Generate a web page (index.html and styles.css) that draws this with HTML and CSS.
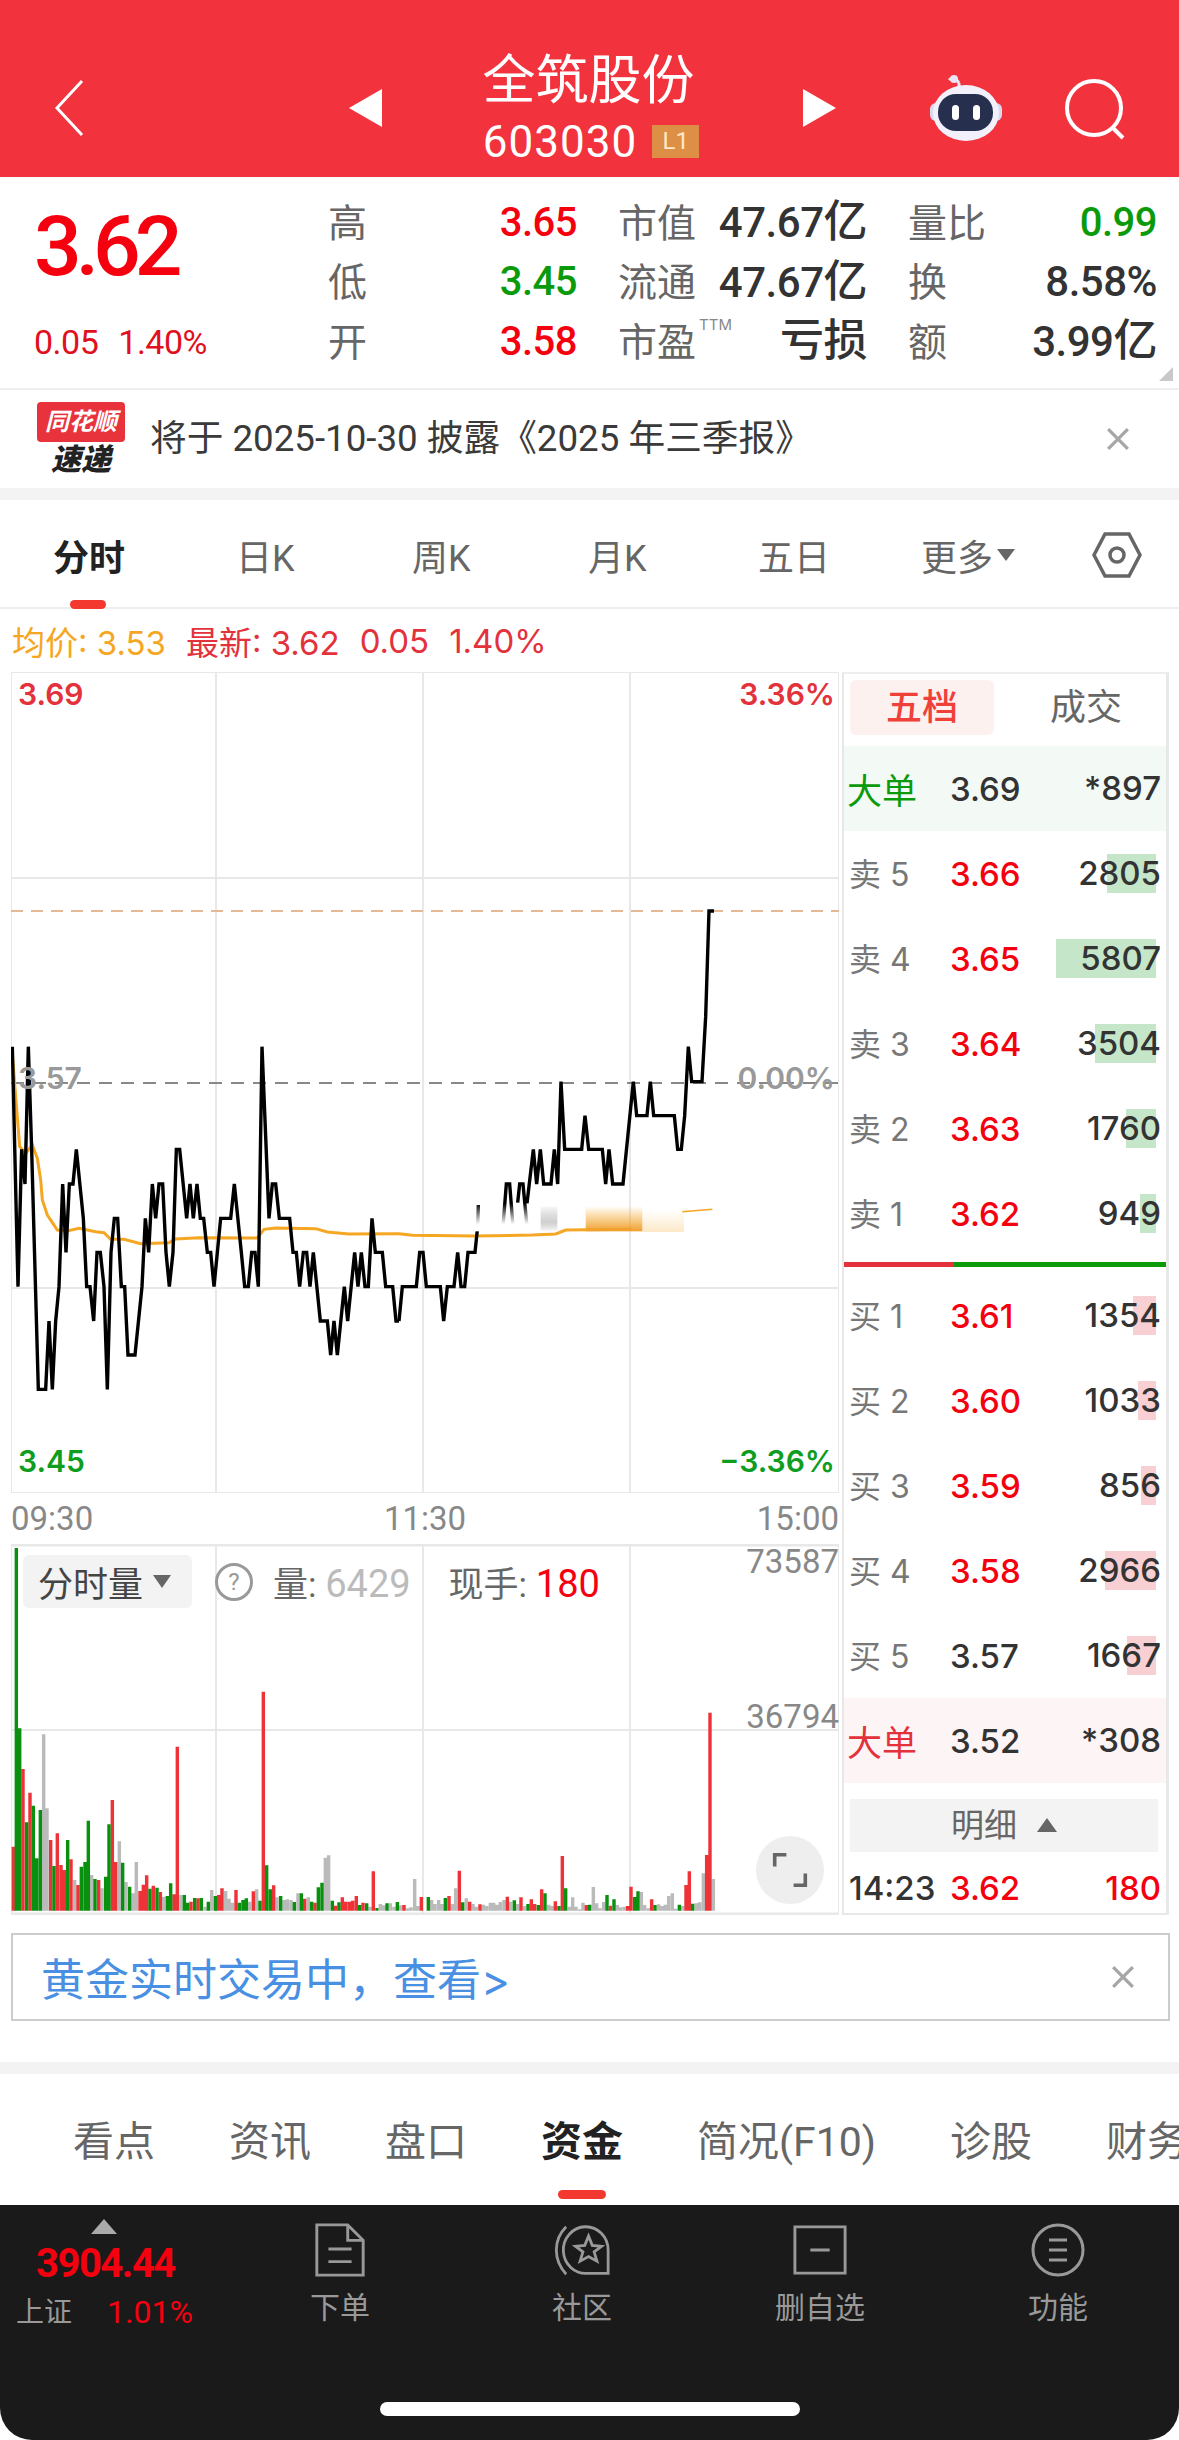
FILE: index.html
```html
<!Doctype html>
<html lang="zh-CN">
<head>
	<meta charset="utf-8">
	<title>全筑股份 603030</title>
	<link rel="stylesheet" href="styles.css">
</head>

<body>

	<header class="top">
		<svg class="back" viewBox="0 0 32 58"><path d="M29 2 4 29l25 27"/></svg>
		<span class="tri tri-left"></span>
		<div class="title">
			<div class="title-name">全筑股份</div>
			<div class="title-code">603030<span class="badge">L1</span></div>
		</div>
		<span class="tri tri-right"></span>
		<svg class="robot" viewBox="0 0 74 68">
			<path class="robot-stalk" d="M30 10c-4-6-8-5-10-3M30 10v4"/>
			<circle cx="25" cy="6" r="4" fill="#e8e6f6"/>
			<rect x="1" y="30" width="72" height="18" rx="6" fill="#d9d9ef"/>
			<ellipse cx="37" cy="40" rx="33" ry="28" fill="#f2f1fb"/>
			<rect x="9" y="21" width="55" height="37" rx="18" fill="#262f4e"/>
			<rect x="23" y="32" width="7" height="15" rx="3.5" fill="#fff"/>
			<rect x="44" y="32" width="7" height="15" rx="3.5" fill="#fff"/>
		</svg>
		<svg class="search" viewBox="0 0 62 64"><circle cx="30" cy="30" r="27"/><path d="M49 50l10 10"/></svg>
	</header>

	<section class="stats">
		<div class="quote">
			<div class="quote-price">3.62</div>
			<div class="quote-change"><span>0.05</span><span>1.40%</span></div>
		</div>
		<div class="stat-grid">
			<div class="stat"><span class="stat-key">高</span><span class="stat-val red">3.65</span></div>
			<div class="stat"><span class="stat-key">市值</span><span class="stat-val">47.67<span class="yi">亿</span></span></div>
			<div class="stat"><span class="stat-key">量比</span><span class="stat-val green">0.99</span></div>
			<div class="stat"><span class="stat-key">低</span><span class="stat-val green">3.45</span></div>
			<div class="stat"><span class="stat-key">流通</span><span class="stat-val">47.67<span class="yi">亿</span></span></div>
			<div class="stat"><span class="stat-key">换</span><span class="stat-val">8.58%</span></div>
			<div class="stat"><span class="stat-key">开</span><span class="stat-val red">3.58</span></div>
			<div class="stat"><span class="stat-key">市盈<sup class="ttm">TTM</sup></span><span class="stat-val"><span class="yi">亏损</span></span></div>
			<div class="stat"><span class="stat-key">额</span><span class="stat-val">3.99<span class="yi">亿</span></span></div>
		</div>
		<span class="corner"></span>
	</section>

	<section class="notice">
		<div class="logo">
			<div class="logo-top">同花顺</div>
			<div class="logo-bottom">速递</div>
		</div>
		<div class="notice-text">将于 2025-10-30 披露《2025 年三季报》</div>
		<svg class="close" viewBox="0 0 22 22"><path d="M2 2l18 18M20 2 2 20"/></svg>
	</section>

	<section class="periods">
		<span class="period period-on">分时</span>
		<span class="period">日K</span>
		<span class="period">周K</span>
		<span class="period">月K</span>
		<span class="period">五日</span>
		<span class="period">更多<i class="caret"></i></span>
		<svg class="hex" viewBox="0 0 50 46"><path d="M13 2h24l11 21-11 21H13L2 23z"/><circle cx="25" cy="23" r="7"/></svg>
	</section>

	<div class="avg-row">
		<span class="orange">均价: 3.53</span>
		<span class="soft-red">最新: 3.62</span>
		<span class="soft-red">0.05</span>
		<span class="soft-red">1.40%</span>
	</div>

	<section class="market">
		<div class="charts">
			<div class="price-chart">
				<svg class="canvas" viewBox="12 672 828 821">
					<defs>
						<linearGradient id="fade-white" x1="0" y1="0" x2="0" y2="1">
							<stop offset="0" stop-color="#fff" stop-opacity="0"/>
							<stop offset=".75" stop-color="#fff"/>
						</linearGradient>
						<linearGradient id="fade-orange" x1="0" y1="0" x2="0" y2="1">
							<stop offset="0" stop-color="#f5a623" stop-opacity="0"/>
							<stop offset="1" stop-color="#f0a030"/>
						</linearGradient>
						<linearGradient id="fade-pale" x1="0" y1="0" x2="0" y2="1">
							<stop offset="0" stop-color="#f5a623" stop-opacity="0"/>
							<stop offset="1" stop-color="#f5a623" stop-opacity=".25"/>
						</linearGradient>
						<linearGradient id="fade-gray" x1="0" y1="0" x2="0" y2="1">
							<stop offset="0" stop-color="#aaa" stop-opacity=".1"/>
							<stop offset=".6" stop-color="#bbb" stop-opacity=".7"/>
							<stop offset="1" stop-color="#fff"/>
						</linearGradient>
					</defs>
					<path class="grid-line" d="M12 672H840M12 878H840M12 1288H840M12 1493H840M12 672V1493M217 672V1493M424 672V1493M631 672V1493M840 672V1493"/>
					<path class="dash-orange" d="M12 911H840"/>
					<path class="dash-gray" d="M12 1083H840"/>
					<g transform="translate(0 1030) scale(.33333)">
						<polyline class="avg-line" points="40,70 50,200 62,350 80,370 100,345 115,385 125,450 130,510 145,555 175,600 205,603 240,595 290,605 315,608 335,628 375,628 425,641 510,638 530,627 600,623 775,624 795,598 830,594 950,596 985,606 1050,612 1200,611"/>
						<polyline class="price-line" points="40,50 57,770 68,358 78,462 88,50 98,360 118,1078 140,1078 150,873 160,1078 170,873 180,770 191,462 201,667 211,462 222,462 232,358 253,565 263,770 273,770 284,873 294,667 304,667 315,770 325,1078 336,667 346,565 356,565 367,770 377,770 387,975 408,975 429,770 439,565 449,667 460,462 470,565 480,462 491,462 501,667 511,770 522,667 532,358 542,358 563,565 573,462 583,565 594,462 604,565 614,565 625,667 635,667 645,770 665,565 695,565 706,462 727,667 737,770 748,770 758,667 768,667 778,770 789,50 810,565 820,462 830,462 841,565 872,565 882,667 892,667 902,770 913,667 923,667 933,770 943,667 964,873 985,873 995,975 1005,873 1015,975 1036,770 1046,873 1067,667 1077,770 1087,667 1098,770 1108,770 1119,565 1129,667 1150,667 1160,770 1181,770 1191,873 1200,873"/>
					</g>
					<g transform="translate(400 1030) scale(.33333)">
						<polyline class="avg-line" points="0,611 40,616 230,618 400,615 470,612 500,600 700,598"/>
						<polyline class="avg-line-thin" points="850,545 940,538"/>
						<rect x="560" y="528" width="170" height="76" fill="url(#fade-orange)"/>
						<rect x="730" y="540" width="125" height="66" fill="url(#fade-pale)"/>
						<rect x="425" y="530" width="50" height="76" fill="url(#fade-gray)"/>
						<polyline class="price-line" points="0,873 10,770 52,770 62,667 72,667 82,770 124,770 134,873 145,770 165,770 176,667 186,770 197,770 207,667 228,667 236,590 238,525"/>
						<polyline class="price-line" points="312,590 322,462 332,462 342,590"/>
						<polyline class="price-line" points="356,518 362,462 372,462 384,590"/>
						<polyline class="price-line" points="384,520 403,358 413,462 424,358 434,462 456,462 466,358 476,462 486,155 497,358 548,358 558,257 569,358 610,358 620,462 630,358 641,462 672,462 703,155 713,257 744,257 754,155 764,257 826,257 836,358 847,358 857,257 868,50 878,155 909,155 920,-40 930,-357 945,-357"/>
						<rect x="225" y="520" width="175" height="84" fill="url(#fade-white)"/>
					</g>
				</svg>
				<span class="axis-label al-tl soft-red">3.69</span>
				<span class="axis-label al-tr soft-red">3.36%</span>
				<span class="axis-label al-ml muted">3.57</span>
				<span class="axis-label al-mr muted">0.00%</span>
				<span class="axis-label al-bl deep-green">3.45</span>
				<span class="axis-label al-br deep-green">−3.36%</span>
			</div>

			<div class="time-axis"><span>09:30</span><span>11:30</span><span>15:00</span></div>

			<div class="vol-chart">
				<svg class="canvas" viewBox="12 1544 828 371">
					<path class="grid-line" d="M12 1730H840M12 1544V1915M217 1544V1915M424 1544V1915M631 1544V1915M840 1544V1915"/>
					<path class="grid-strong" d="M12 1545H840M12 1914H840"/>
					<g transform="translate(0 1680) scale(.33333)">
						<path class="bar bar-gray" d="M134 692V163M144 692V385M227 692V600M278 692V585M309 692V625M361 692V484M381 692V606M402 692V640M412 692V546M494 692V650M546 692V645M618 692V680M638 692V630M680 692V633M690 692V656M700 692V668M752 692V665M773 692V628M834 692V652M855 692V660M865 692V658M876 692V660M897 692V640M928 692V652M979 692V533M989 692V526M1113 692V680"/>
						<path class="bar bar-red" d="M43 692V500M72 692V267M93 692V338M155 692V480M175 692V460M186 692V555M196 692V570M216 692V538M237 692V615M299 692V600M340 692V360M350 692V546M423 692V633M433 692V614M443 692V586M463 692V617M484 692V636M525 692V643M535 692V200M576 692V665M597 692V655M659 692V645M669 692V625M711 692V630M763 692V634M793 692V35M824 692V616M917 692V656M948 692V668M1010 692V677M1030 692V652M1040 692V665M1051 692V665M1061 692V662M1072 692V648M1092 692V668M1123 692V574"/>
						<path class="bar bar-green" d="M52 692V-396M62 692V145M83 692V427M103 692V377M113 692V535M124 692V390M165 692V558M206 692V480M247 692V560M258 692V546M268 692V422M288 692V597M320 692V590M330 692V433M371 692V548M392 692V620M453 692V626M474 692V623M505 692V648M515 692V610M556 692V645M566 692V668M587 692V654M607 692V654M628 692V665M649 692V648M721 692V668M732 692V660M742 692V655M783 692V662M803 692V556M814 692V628M845 692V648M886 692V666M907 692V640M938 692V665M958 692V622M969 692V608M1000 692V662M1020 692V667M1082 692V675M1103 692V670M1134 692V684"/>
					</g>
					<g transform="translate(370 1680) scale(.33333)">
						<path class="bar bar-gray" d="M34 692V672M44 692V676M64 692V670M75 692V680M95 692V676M116 692V685M126 692V682M137 692V597M147 692V678M188 692V660M198 692V672M209 692V660M219 692V672M250 692V672M260 692V625M292 692V655M312 692V672M322 692V680M343 692V674M353 692V678M364 692V668M374 692V668M384 692V674M394 692V666M405 692V660M425 692V665M446 692V672M466 692V678M539 692V674M549 692V678M601 692V680M611 692V652M621 692V680M632 692V688M642 692V668M673 692V621M683 692V670M693 692V685M704 692V666M745 692V675M755 692V682M766 692V680M817 692V636M827 692V675M838 692V685M869 692V673M879 692V678M889 692V674M899 692V648M910 692V640M920 692V686M941 692V678M982 692V670M992 692V667M1003 692V580M1033 692V597"/>
						<path class="bar bar-red" d="M105 692V675M157 692V651M240 692V648M271 692V572M302 692V665M333 692V673M415 692V650M456 692V652M487 692V658M497 692V672M518 692V628M559 692V664M580 692V528M652 692V675M724 692V677M776 692V678M786 692V620M848 692V658M951 692V615M961 692V574M1013 692V525M1018 692V525M1023 692V98"/>
						<path class="bar bar-green" d="M54 692V670M85 692V666M178 692V651M229 692V654M281 692V667M436 692V661M477 692V672M508 692V675M528 692V640M570 692V678M590 692V625M662 692V674M714 692V645M735 692V658M797 692V651M807 692V634M858 692V675M931 692V674M971 692V671"/>
					</g>
				</svg>
				<div class="vol-legend">
					<span class="vol-pill">分时量<i class="caret caret-pill"></i></span>
					<span class="help">?</span>
					<span>量: <b class="light">6429</b></span>
					<span class="vol-now">现手: <b class="red">180</b></span>
				</div>
				<span class="vol-max vm-top">73587</span>
				<span class="vol-max vm-mid">36794</span>
				<span class="expand">
					<svg viewBox="0 0 40 40"><path d="M3 16V3h13M37 24v13H24"/></svg>
				</span>
			</div>
		</div>

		<div class="book">
			<div class="book-tabs">
				<span class="book-tab book-tab-on">五档</span>
				<span class="book-tab">成交</span>
			</div>
			<div class="row row-big-sell"><span class="green-label">大单</span><span class="px">3.69</span><span class="qty">*897</span></div>
			<div class="row"><span class="lbl">卖 5</span><span class="px red">3.66</span><span class="qty"><i class="vol-bar vb-sell" style="width:49px"></i>2805</span></div>
			<div class="row"><span class="lbl">卖 4</span><span class="px red">3.65</span><span class="qty"><i class="vol-bar vb-sell" style="width:100px"></i>5807</span></div>
			<div class="row"><span class="lbl">卖 3</span><span class="px red">3.64</span><span class="qty"><i class="vol-bar vb-sell" style="width:61px"></i>3504</span></div>
			<div class="row"><span class="lbl">卖 2</span><span class="px red">3.63</span><span class="qty"><i class="vol-bar vb-sell" style="width:30px"></i>1760</span></div>
			<div class="row"><span class="lbl">卖 1</span><span class="px red">3.62</span><span class="qty"><i class="vol-bar vb-sell" style="width:16px"></i>949</span></div>
			<div class="split"><span class="split-red"></span><span class="split-green"></span></div>
			<div class="row"><span class="lbl">买 1</span><span class="px red">3.61</span><span class="qty"><i class="vol-bar vb-buy" style="width:23px"></i>1354</span></div>
			<div class="row"><span class="lbl">买 2</span><span class="px red">3.60</span><span class="qty"><i class="vol-bar vb-buy" style="width:18px"></i>1033</span></div>
			<div class="row"><span class="lbl">买 3</span><span class="px red">3.59</span><span class="qty"><i class="vol-bar vb-buy" style="width:15px"></i>856</span></div>
			<div class="row"><span class="lbl">买 4</span><span class="px red">3.58</span><span class="qty"><i class="vol-bar vb-buy" style="width:51px"></i>2966</span></div>
			<div class="row"><span class="lbl">买 5</span><span class="px">3.57</span><span class="qty"><i class="vol-bar vb-buy" style="width:29px"></i>1667</span></div>
			<div class="row row-big-buy"><span class="red-label">大单</span><span class="px">3.52</span><span class="qty">*308</span></div>
			<div class="detail">明细<i class="caret-up"></i></div>
			<div class="row row-last"><span>14:23</span><span class="px red">3.62</span><span class="qty red">180</span></div>
		</div>
	</section>

	<section class="gold">
		<span class="gold-text">黄金实时交易中，查看&gt;</span>
		<svg class="close" viewBox="0 0 22 22"><path d="M2 2l18 18M20 2 2 20"/></svg>
	</section>

	<section class="sub-tabs">
		<span>看点</span>
		<span>资讯</span>
		<span>盘口</span>
		<span class="sub-on">资金</span>
		<span>简况(F10)</span>
		<span>诊股</span>
		<span>财务</span>
	</section>

	<footer class="dock">
		<div class="dock-row">
			<div class="index">
				<i class="index-up"></i>
				<div class="index-value">3904.44</div>
				<div class="index-line"><span>上证</span><span class="index-pct">1.01%</span></div>
			</div>
			<div class="dock-item dock-order">
				<svg viewBox="0 0 54 58"><path d="M3 3h32l16 16v36H3zM35 3v16h16M15 28h24M15 41h24"/></svg>
				<span>下单</span>
			</div>
			<div class="dock-item dock-social">
				<svg viewBox="0 0 60 58"><path d="M13 4C-1 18-1 40 13 55M58 54H36a24 25 0 1 1 22-25zM37 14l4 10 10 1-8 6 3 10-9-5-9 5 3-10-8-6 10-1z"/></svg>
				<span>社区</span>
			</div>
			<div class="dock-item dock-fav">
				<svg viewBox="0 0 58 54"><path d="M3 3h52v48H3zM19 27h20"/></svg>
				<span>删自选</span>
			</div>
			<div class="dock-item dock-more">
				<svg viewBox="0 0 56 56"><circle cx="28" cy="28" r="25"/><path d="M19 18h18M19 28h18M19 38h18"/></svg>
				<span>功能</span>
			</div>
		</div>
		<div class="home-bar"></div>
	</footer>

</body>

</html>
```

FILE: styles.css
```css
html, body {
	margin: 0;
	padding: 0;
	background: #fff;
}

body {
	width: 1179px;
	height: 2440px;
	overflow: hidden;
	font-family: Inter, "Noto Sans CJK SC", sans-serif;
	color: #333;
}

svg {
	display: block;
}

i {
	font-style: normal;
}

.red { color: #f5000f; }
.green { color: #0a9a0a; }
.soft-red { color: #e3323c; }
.orange { color: #f5a623; }
.deep-green { color: #0f9d1f; }
.muted { color: #999; }

/* top bar */

.top {
	height: 177px;
	background: #f2323c;
	display: flex;
	align-items: center;
	padding: 40px 0 0 53px;
	box-sizing: border-box;
}

.back {
	width: 32px;
	height: 58px;
	margin-top: -1px;
}

.back path {
	fill: none;
	stroke: #fff;
	stroke-width: 3;
}

.tri {
	width: 0;
	height: 0;
	border-top: 19px solid transparent;
	border-bottom: 19px solid transparent;
	margin-top: -1px;
}

.tri-left {
	margin-left: 264px;
	border-right: 33px solid #fff;
}

.tri-right {
	border-left: 33px solid #fff;
}

.title {
	width: 421px;
	text-align: center;
	color: #fff;
	margin-top: -6px;
}

.title-name {
	font-size: 53px;
	line-height: 72px;
	font-weight: 400;
	margin-left: -8px;
}

.title-code {
	font-family: Roboto, sans-serif;
	font-size: 44px;
	line-height: 52px;
	letter-spacing: 1px;
	display: flex;
	align-items: center;
	justify-content: center;
	gap: 15px;
	margin-left: -3px;
}

.badge {
	width: 47px;
	height: 33px;
	background: #dc8f45;
	color: #ffe7c8;
	font-size: 24px;
	line-height: 33px;
	letter-spacing: 0;
	text-align: center;
}

.robot {
	width: 74px;
	height: 68px;
	margin-left: 93px;
	margin-top: -3px;
}

.robot-stalk {
	fill: none;
	stroke: #e8e6f6;
	stroke-width: 3;
}

.search {
	width: 62px;
	height: 64px;
	margin-left: 61px;
	margin-top: 3px;
}

.search circle, .search path {
	fill: none;
	stroke: #fff;
	stroke-width: 4;
}

/* quote block */

.stats {
	position: relative;
	height: 211px;
	border-bottom: 2px solid #eee;
	display: flex;
	padding-left: 34px;
}

.quote {
	width: 294px;
}

.quote-price {
	font-family: Roboto, sans-serif;
	font-weight: 500;
	font-size: 84px;
	line-height: 84px;
	letter-spacing: -6px;
	color: #f5000f;
	margin-top: 28px;
}

.quote-change {
	font-family: Roboto, sans-serif;
	font-size: 34px;
	line-height: 40px;
	color: #e01020;
	display: flex;
	gap: 20px;
	margin-top: 33px;
	letter-spacing: -0.5px;
}

.stat-grid {
	display: grid;
	grid-template-columns: repeat(3, 249px);
	grid-auto-rows: 59.5px;
	column-gap: 41px;
	padding-top: 16px;
}

.stat {
	display: flex;
	align-items: center;
	justify-content: space-between;
}

.stat-key {
	font-size: 39px;
	line-height: 44px;
	color: #666;
	position: relative;
}

.ttm {
	position: absolute;
	left: 100%;
	top: -5px;
	font-size: 15px;
	line-height: 20px;
	margin-left: 3px;
	color: #888;
}

.stat-val {
	font-family: Roboto, "Noto Sans CJK SC", sans-serif;
	font-size: 42px;
	line-height: 46px;
	font-weight: 500;
	letter-spacing: -0.5px;
}

.stat-val.red, .stat-val.green {
	font-size: 40px;
}

.yi {
	font-size: 44px;
}

.corner {
	position: absolute;
	right: 6px;
	bottom: 7px;
	border-left: 14px solid transparent;
	border-bottom: 14px solid #c8c8c8;
}

/* notice */

.notice {
	height: 98px;
	border-bottom: 12px solid #f3f3f3;
	display: flex;
	align-items: center;
	padding-left: 37px;
}

.logo {
	width: 88px;
	text-align: center;
}

.logo-top {
	background: #e8323c;
	color: #fff;
	font-size: 24px;
	line-height: 40px;
	font-weight: 700;
	font-style: italic;
	border-radius: 4px;
	white-space: nowrap;
	overflow: hidden;
}

.logo-bottom {
	font-size: 30px;
	line-height: 34px;
	font-weight: 900;
	font-style: italic;
	color: #222;
}

.notice-text {
	font-family: Roboto, "Noto Sans CJK SC", sans-serif;
	font-size: 36.7px;
	line-height: 44px;
	margin-left: 25px;
	color: #3a3a3a;
}

.close {
	width: 24px;
	height: 24px;
	margin-left: auto;
	margin-right: 49px;
}

.close path {
	fill: none;
	stroke: #a6a6a6;
	stroke-width: 3;
}

/* period tabs */

.periods {
	height: 107px;
	border-bottom: 2px solid #eee;
	display: flex;
	align-items: center;
	padding-left: 53px;
}

.period {
	font-family: Roboto, "Noto Sans CJK SC", sans-serif;
	font-size: 36px;
	color: #666;
	width: 176px;
	display: flex;
	align-items: center;
	height: 50px;
	margin-top: 2px;
}

.period:nth-child(4) { width: 170px; }
.period:nth-child(5) { width: 163px; }
.period:nth-child(6) { width: 171px; }

.period-on {
	color: #222;
	font-weight: 700;
	position: relative;
	width: 183px;
}

.period-on:after {
	content: "";
	position: absolute;
	left: 17px;
	top: 70px;
	width: 36px;
	height: 9px;
	border-radius: 5px;
	background: #f33830;
}

.caret {
	border-left: 9px solid transparent;
	border-right: 9px solid transparent;
	border-top: 12px solid #666;
	margin-left: 4px;
}

.hex {
	width: 50px;
	height: 46px;
	margin-top: 2px;
}

.hex path, .hex circle {
	fill: none;
	stroke: #666;
	stroke-width: 3.5;
}

.avg-row {
	height: 63px;
	padding-left: 12px;
	display: flex;
	align-items: center;
	gap: 20px;
	font-size: 33px;
	box-sizing: border-box;
}

/* chart and order book */

.market {
	display: flex;
	padding-left: 11px;
	height: 1245px;
}

.charts {
	width: 829px;
	margin-right: 2px;
}

.canvas {
	position: absolute;
	left: 0;
	top: 0;
	width: 828px;
	height: 100%;
}

.price-chart {
	position: relative;
	height: 821px;
}

.grid-line {
	fill: none;
	stroke: #e8e8e8;
	stroke-width: 2;
}

.grid-strong {
	fill: none;
	stroke: #e8e8e8;
	stroke-width: 3;
}

.dash-orange {
	fill: none;
	stroke: #e4ba96;
	stroke-width: 2;
	stroke-dasharray: 12 8;
}

.dash-gray {
	fill: none;
	stroke: #888;
	stroke-width: 2;
	stroke-dasharray: 13 9;
}

.price-line {
	fill: none;
	stroke: #000;
	stroke-width: 3.4;
	vector-effect: non-scaling-stroke;
}

.avg-line {
	fill: none;
	stroke: #f5a623;
	stroke-width: 3;
	vector-effect: non-scaling-stroke;
}

.avg-line-thin {
	fill: none;
	stroke: #f5a623;
	stroke-width: 1.5;
	vector-effect: non-scaling-stroke;
}

.axis-label {
	position: absolute;
	font-size: 30px;
	line-height: 36px;
	font-weight: 600;
}

.al-tl { left: 7px; top: 4px; }
.al-tr { right: 5px; top: 4px; }
.al-ml { left: 7px; top: 388px; }
.al-mr { right: 5px; top: 388px; }
.al-bl { left: 7px; bottom: 14px; }
.al-br { right: 5px; bottom: 14px; }

.time-axis {
	height: 51px;
	display: flex;
	justify-content: space-between;
	align-items: center;
	font-family: Roboto, sans-serif;
	font-size: 33px;
	color: #888;
	padding-right: 1px;
}

.vol-chart {
	position: relative;
	height: 371px;
}

.bar {
	fill: none;
	stroke-width: 10.3;
}

.bar-gray { stroke: #bababa; }
.bar-red { stroke: #ee3338; }
.bar-green { stroke: #0a900f; }

.vol-legend {
	position: absolute;
	left: 12px;
	top: 11px;
	display: flex;
	align-items: center;
	font-size: 35px;
	color: #666;
	font-family: Roboto, "Noto Sans CJK SC", sans-serif;
}

.vol-legend b {
	font-weight: 400;
	font-size: 38px;
}

.light {
	color: #bbb;
}

.vol-pill {
	width: 169px;
	height: 53px;
	background: #f3f3f3;
	border-radius: 6px;
	color: #444;
	display: flex;
	align-items: center;
	padding-left: 15px;
	box-sizing: border-box;
}

.caret-pill {
	margin-left: 10px;
	border-left-width: 9px;
	border-right-width: 9px;
	border-top-width: 13px;
}

.help {
	width: 32px;
	height: 32px;
	border: 3px solid #999;
	border-radius: 50%;
	color: #999;
	font-size: 24px;
	line-height: 32px;
	text-align: center;
	margin: 0 20px 0 23px;
}

.vol-now {
	margin-left: 38px;
}

.vol-max {
	position: absolute;
	right: 1px;
	font-family: Roboto, sans-serif;
	font-size: 33px;
	line-height: 38px;
	color: #888;
}

.vm-top { top: -1px; }
.vm-mid { top: 154px; }

.expand {
	position: absolute;
	left: 745px;
	top: 292px;
	width: 68px;
	height: 68px;
	border-radius: 50%;
	background: #eee;
	display: flex;
	align-items: center;
	justify-content: center;
}

.expand svg {
	width: 36px;
	height: 36px;
}

.expand path {
	fill: none;
	stroke: #666;
	stroke-width: 4;
}

.book {
	width: 327px;
	height: 1243px;
	box-sizing: border-box;
	border-left: 2px solid #e8e8e8;
	border-right: 3px solid #e8e8e8;
	border-top: 2px solid #eee;
	border-bottom: 2px solid #e8e8e8;
}

.book-tabs {
	height: 72px;
	padding: 6px 0 0 6px;
	box-sizing: border-box;
	display: flex;
	align-items: flex-start;
}

.book-tab {
	width: 144px;
	height: 55px;
	border-radius: 6px;
	text-align: center;
	font-size: 36px;
	line-height: 55px;
	color: #666;
}

.book-tab + .book-tab {
	margin-left: 20px;
}

.book-tab-on {
	background: #fdf1f0;
	color: #f0403a;
	font-weight: 500;
}

.row {
	height: 85px;
	display: grid;
	grid-template-columns: 101px 100px 1fr;
	align-items: center;
	padding: 0 5px;
	font-size: 33px;
	font-weight: 500;
}

.row-big-sell {
	background: #f3f9f5;
}

.row-big-buy {
	background: #fdf4f5;
}

.green-label, .red-label {
	font-size: 35px;
	font-weight: 400;
	margin-left: -2px;
	white-space: nowrap;
}

.green-label { color: #0a9a0a; }
.red-label { color: #e3323c; }

.lbl {
	color: #777;
	font-size: 32px;
	font-weight: 400;
	margin-top: -3px;
}

.px {
	color: #333;
}

.px.red {
	color: #f5000f;
}

.qty {
	position: relative;
	text-align: right;
	line-height: 39px;
	isolation: isolate;
}

.vol-bar {
	position: absolute;
	right: 5px;
	top: 0;
	height: 39px;
	z-index: -1;
}

.vb-sell { background: #c6e6c9; }
.vb-buy { background: #f8d0d4; }

.split {
	display: flex;
	height: 5px;
	margin: 6px 0;
}

.split-red {
	width: 110px;
	background: #e3323c;
}

.split-green {
	flex: 1;
	background: #0a9a0a;
}

.detail {
	height: 53px;
	margin: 16px 8px 0 6px;
	background: #f3f3f3;
	font-size: 33px;
	line-height: 53px;
	text-align: center;
	color: #666;
}

.caret-up {
	display: inline-block;
	margin-left: 20px;
	border-left: 10px solid transparent;
	border-right: 10px solid transparent;
	border-bottom: 14px solid #666;
	vertical-align: 5px;
}

.row-last {
	height: 58px;
	padding-top: 7px;
}

/* gold banner */

.gold {
	height: 84px;
	margin: 16px 9px 0 11px;
	border: 2px solid #ccc;
	display: flex;
	align-items: center;
	padding-left: 28px;
}

.gold-text {
	font-size: 44px;
	color: #4a90e2;
}

.gold .close {
	margin-right: 33px;
}

/* lower tabs */

.sub-tabs {
	margin-top: 41px;
	border-top: 12px solid #f3f3f3;
	height: 127px;
	padding: 0 0 4px 73px;
	display: flex;
	align-items: center;
	gap: 74px;
	overflow: hidden;
	font-family: Roboto, "Noto Sans CJK SC", sans-serif;
	font-size: 41px;
	color: #666;
	white-space: nowrap;
}

.sub-on {
	color: #222;
	font-weight: 700;
	position: relative;
}

.sub-on:after {
	content: "";
	position: absolute;
	left: 17px;
	top: 82px;
	width: 48px;
	height: 9px;
	border-radius: 5px;
	background: #f33830;
}

/* bottom dock */

.dock {
	height: 235px;
	background: #1a1a1a;
	border-radius: 0 0 32px 32px;
	position: relative;
}

.dock-row {
	display: flex;
	position: relative;
	height: 140px;
}

.index {
	width: 220px;
	position: relative;
	padding: 38px 0 0 16px;
	box-sizing: border-box;
}

.index-up {
	position: absolute;
	left: 91px;
	top: 14px;
	border-left: 13px solid transparent;
	border-right: 13px solid transparent;
	border-bottom: 15px solid #aaa;
}

.index-value {
	font-family: Roboto, sans-serif;
	font-size: 40px;
	line-height: 42px;
	font-weight: 700;
	letter-spacing: -1.5px;
	color: #f5000f;
	margin-left: 20px;
}

.index-line {
	display: flex;
	align-items: center;
	font-size: 28px;
	line-height: 40px;
	color: #999;
	margin-top: 7px;
}

.index-pct {
	font-family: Roboto, sans-serif;
	font-size: 32px;
	color: #f5000f;
	margin-left: 35px;
}

.dock-item {
	position: absolute;
	top: 17px;
	width: 160px;
	margin-left: -80px;
	display: flex;
	flex-direction: column;
	align-items: center;
	gap: 11px;
	color: #999;
	font-size: 30px;
	line-height: 36px;
}

.dock-order { left: 340px; }
.dock-social { left: 582px; }
.dock-fav { left: 820px; }
.dock-more { left: 1058px; }

.dock-item svg {
	width: 56px;
	height: 56px;
}

.dock-item path, .dock-item circle {
	fill: none;
	stroke: #999;
	stroke-width: 3;
}

.home-bar {
	position: absolute;
	left: 380px;
	bottom: 24px;
	width: 420px;
	height: 14px;
	border-radius: 7px;
	background: #fff;
}
```
